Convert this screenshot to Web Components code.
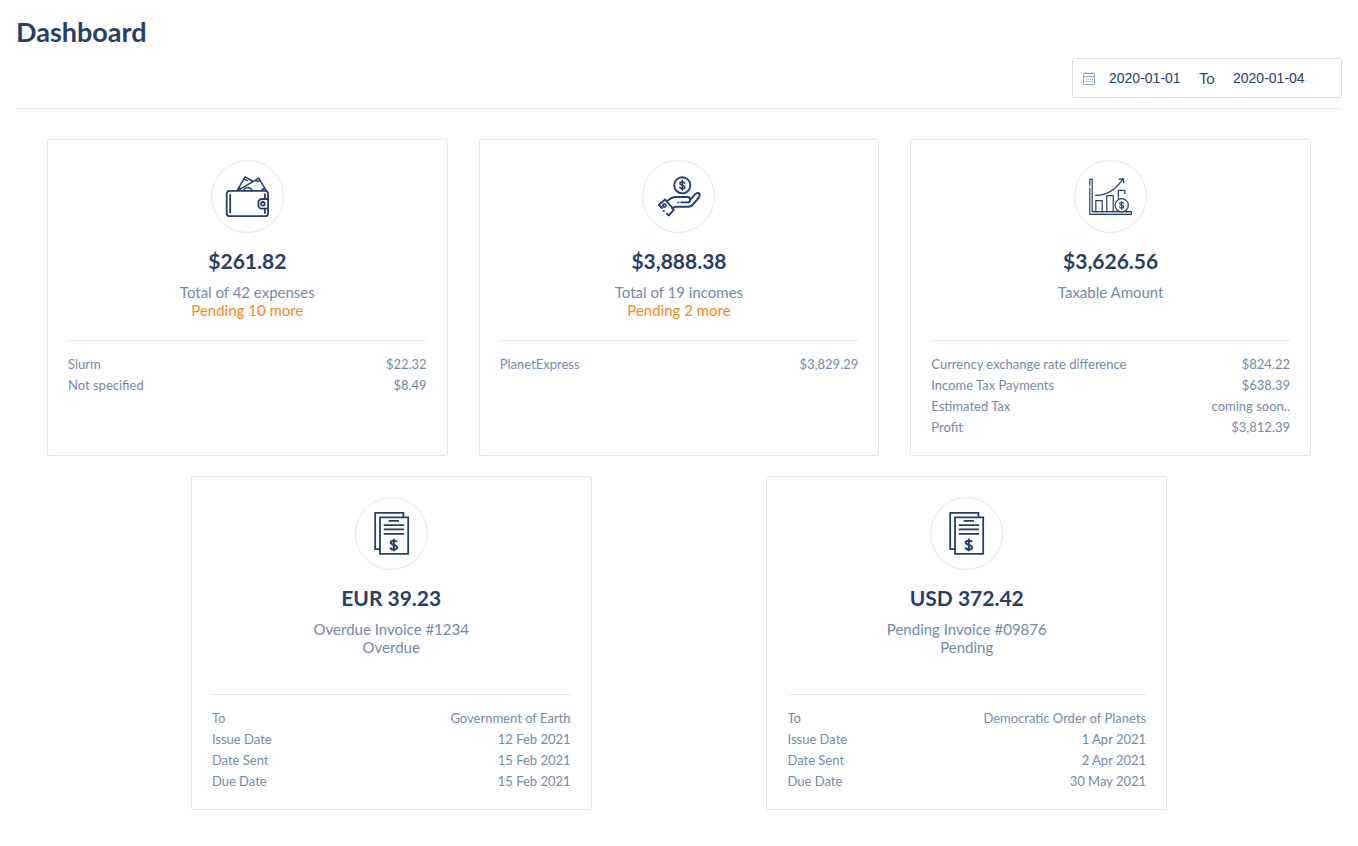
<!DOCTYPE html>
<html lang="en">
<head>
<meta charset="utf-8">
<meta name="viewport" content="width=device-width, initial-scale=1">
<title>Dashboard</title>
<style>
  body {
    margin: 0;
    background: #fff;
    color: #263f68;
    font-family: Muli, Lato, sans-serif;
  }
</style>
</head>
<body>
<dash-page>
  <date-range slot="tools" from="2020-01-01" to="2020-01-04"></date-range>

  <stat-card icon="wallet" amount="$261.82">
    <span slot="summary">Total of 42 expenses</span>
    <span slot="pending">Pending 10 more</span>
    <detail-row label="Slurm">$22.32</detail-row>
    <detail-row label="Not specified">$8.49</detail-row>
  </stat-card>

  <stat-card icon="income" amount="$3,888.38">
    <span slot="summary">Total of 19 incomes</span>
    <span slot="pending">Pending 2 more</span>
    <detail-row label="PlanetExpress">$3,829.29</detail-row>
  </stat-card>

  <stat-card icon="chart" amount="$3,626.56">
    <span slot="summary">Taxable Amount</span>
    <detail-row label="Currency exchange rate difference">$824.22</detail-row>
    <detail-row label="Income Tax Payments">$638.39</detail-row>
    <detail-row label="Estimated Tax">coming soon..</detail-row>
    <detail-row label="Profit">$3,812.39</detail-row>
  </stat-card>

  <stat-card class="invoice" icon="invoice" amount="EUR 39.23">
    <span slot="summary">Overdue Invoice #1234</span>
    <span slot="status">Overdue</span>
    <detail-row label="To">Government of Earth</detail-row>
    <detail-row label="Issue Date">12 Feb 2021</detail-row>
    <detail-row label="Date Sent">15 Feb 2021</detail-row>
    <detail-row label="Due Date">15 Feb 2021</detail-row>
  </stat-card>

  <stat-card class="invoice" icon="invoice" amount="USD 372.42">
    <span slot="summary">Pending Invoice #09876</span>
    <span slot="status">Pending</span>
    <detail-row label="To">Democratic Order of Planets</detail-row>
    <detail-row label="Issue Date">1 Apr 2021</detail-row>
    <detail-row label="Date Sent">2 Apr 2021</detail-row>
    <detail-row label="Due Date">30 May 2021</detail-row>
  </stat-card>
</dash-page>

<script>
const ICONS = {
  wallet: `
    <g stroke-width="1.8">
      <rect x="15.7" y="30.8" width="41.4" height="25.4" rx="3"/>
      <path d="M19.2 35v17.5M53.9 34.2v4.6M53.9 48.6v4.4"/>
      <path d="M57 39h-6.2a3.4 3.4 0 0 0-3.4 3.4v2.8a3.4 3.4 0 0 0 3.4 3.4H57"/>
      <circle cx="51.9" cy="43.8" r="1.8"/>
    </g>
    <g stroke-width="1.5">
      <path d="M26.2 30.5 34 16.8l7.2 4.2M28 29.8l19.8-11.6 7.4 12.4M33 19.2l3.3 1.4M44.4 20.3c1.8 1.8 4 .8 4.6-.7M51.2 29.5l2.6-1.2"/>
      <path d="M32.8 30.4c.8-3.6 6.6-3.8 8 0M27.6 27.5l2.2 1.2"/>
    </g>`,
  income: `
    <g stroke-width="1.9">
      <circle cx="40.3" cy="25.3" r="8.1"/>
      <path d="M25 41.2c3-2.6 4.8-4.2 8.7-4.2h11.8c3.6 0 3.6 5.4 0 5.4h-6.2M36.2 42.4h.3"/>
      <path d="m48.3 39.7 5-5.5c2.4-2.5 5.4-.9 4.1 2.2-.4 1-1.2 2-1.8 2.8L50.4 45c-1.2 1.3-2.3 1.7-4 1.7H34.2c-1.8 0-3 .8-4 1.6"/>
      <path d="m20 48-3-3.2 6.2-5.3 8.6 10.1-4.8 5.8-2.2-1.6M21.7 50.8l.3.3"/>
      <circle cx="22.4" cy="45.6" r="1.5"/>
    </g>
    <path stroke-width="1.6" d="M42.6 23.3c-.5-1.8-4.7-1.9-4.7.2 0 2.3 4.8 1.2 4.8 3.7 0 2.2-4.4 2.1-4.9.1M40.3 20.4v9.8"/>`,
  chart: `
    <g stroke-width="1.2">
      <path d="M15.8 25.5v-6.2h2.4v32.4h39.2v2.6H15.8V28"/>
      <path fill="#a8b3c6" stroke="none" d="M18.2 52.2h38.8v1.6H18.2z"/>
      <path d="M21.8 51.7V40.6h6.4v11.1M32.8 51.7v-16h6.4v16M44.4 38.7v-8.4h6.4v3.2"/>
      <path d="M21.6 35.4c11.8.2 19.8-5.6 27.2-16M45.3 19.4l3.9-.7.5 4.1"/>
      <circle cx="47.7" cy="45.3" r="6.6" fill="#fff"/>
      <path d="M49.6 43.6c-.5-1.5-3.9-1.5-3.9.2 0 1.9 4 1 4 3 0 1.9-3.6 1.8-4.1.1M47.7 41.3v8.1"/>
    </g>`,
  invoice: `
    <g stroke-width="1.8" stroke-linecap="butt" stroke-linejoin="miter">
      <path d="M24.6 52.2h-4.4V15.9h28.2v4"/>
      <path d="M25 20.4h28.2v36.4H25z"/>
      <path d="M33.7 23.9H44M28.7 28.2H49M28.7 32.4H49M28.7 36.8H49"/>
      <path stroke-width="2" d="M41.9 45.3c-.7-2.2-6.2-2-6.2.4 0 2.9 6.4 1.4 6.4 4.7 0 2.7-5.9 2.8-6.7.2M38.8 41.8v12.4"/>
    </g>`
};

class BaseElement extends HTMLElement {
  connectedCallback() {
    if (this.shadowRoot) return;
    this.attachShadow({ mode: 'open' }).innerHTML = this.render();
  }
}

class DashPage extends BaseElement {
  render() {
    return `
      <style>
        :host { display: block; padding: 16px 16px 32px; }
        h1 { margin: 0; font-size: 27px; line-height: 32px; font-weight: 700; }
        header { padding-bottom: 10px; border-bottom: 1px solid #e6e6ea; }
        .tools { display: flex; justify-content: flex-end; padding-top: 10px; }
        main {
          display: flex; flex-wrap: wrap; justify-content: space-evenly;
          row-gap: 20px; padding-top: 30px;
        }
        ::slotted(stat-card) { width: calc((100% - 124px) / 3); }
        ::slotted(.invoice) { --summary-height: 53px; }
      </style>
      <header>
        <h1>Dashboard</h1>
        <div class="tools"><slot name="tools"></slot></div>
      </header>
      <main><slot></slot></main>`;
  }
}

class DateRange extends BaseElement {
  render() {
    return `
      <style>
        :host {
          display: flex; align-items: center; box-sizing: border-box;
          width: 270px; height: 40px; padding: 0 10px;
          border: 1px solid #dcdce6; border-radius: 2px;
        }
        svg { flex: none; width: 12px; height: 13px; margin-right: 14px; }
        input {
          flex: none; width: 72px; padding: 0; border: 0; background: none; outline: 0;
          color: #263f68; font: 14px "Liberation Sans", Arial, sans-serif;
        }
        span { flex: none; width: 52px; text-align: center; font-size: 15px; line-height: 20px; color: #3c4a63; }
      </style>
      <svg viewBox="0 0 12 13" fill="none" stroke="#8ea9c8" aria-hidden="true">
        <path d="M.5 1.5h11v11H.5zM.5 4.5h11M3 0v2M9 0v2"/>
        <path stroke-dasharray="1 1" d="M3 7.5h7M3 9.5h7"/>
      </svg>
      <input type="text" aria-label="From date" value="${this.getAttribute('from')}">
      <span>To</span>
      <input type="text" aria-label="To date" value="${this.getAttribute('to')}">`;
  }
}

class DashIcon extends BaseElement {
  render() {
    return `
      <style>
        :host {
          display: block; box-sizing: border-box; width: 73px; height: 73px;
          border: 1px solid #e6e6ee; border-radius: 50%;
        }
        svg { display: block; margin: -1px; width: 74px; height: 74px; }
      </style>
      <svg viewBox="0 0 74 74" fill="none" stroke="#263f68" stroke-linecap="round"
        stroke-linejoin="round" aria-hidden="true">${ICONS[this.getAttribute('name')]}</svg>`;
  }
}

class StatCard extends BaseElement {
  render() {
    return `
      <style>
        :host {
          display: block; box-sizing: border-box; padding: 20px 20px 17px;
          border: 1px solid #e6e6ea; border-radius: 2px; background: #fff;
        }
        .top {
          display: flex; flex-direction: column; align-items: center;
          padding-bottom: 21px; border-bottom: 1px solid #e2e6ec; text-align: center;
        }
        h2 { margin: 14px 0 8px; font-size: 21px; line-height: 28px; font-weight: 700; }
        .summary {
          display: flex; flex-direction: column; min-height: var(--summary-height, 36px);
          font-size: 15px; line-height: 18px; color: #7489a8;
        }
        ::slotted([slot="pending"]) { color: #f5861f; }
        .details { padding-top: 13px; }
      </style>
      <div class="top">
        <dash-icon name="${this.getAttribute('icon')}"></dash-icon>
        <h2>${this.getAttribute('amount')}</h2>
        <div class="summary">
          <slot name="summary"></slot>
          <slot name="pending"></slot>
          <slot name="status"></slot>
        </div>
      </div>
      <div class="details"><slot></slot></div>`;
  }
}

class DetailRow extends BaseElement {
  render() {
    return `
      <style>
        :host {
          display: flex; justify-content: space-between; gap: 12px;
          font-size: 13px; line-height: 21px; color: #7489a8;
        }
      </style>
      <span>${this.getAttribute('label')}</span>
      <span><slot></slot></span>`;
  }
}

customElements.define('dash-page', DashPage);
customElements.define('date-range', DateRange);
customElements.define('dash-icon', DashIcon);
customElements.define('stat-card', StatCard);
customElements.define('detail-row', DetailRow);
</script>
</body>
</html>
